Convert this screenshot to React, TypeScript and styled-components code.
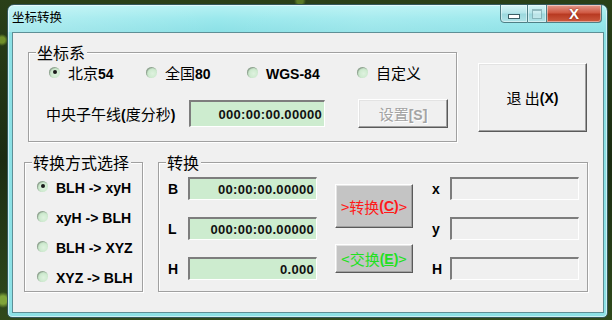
import styled, { createGlobalStyle } from 'styled-components'

const GlobalStyle = createGlobalStyle`
  html, body {
    margin: 0;
    padding: 0;
  }
  body {
    width: 612px;
    height: 320px;
    overflow: hidden;
    font-family: "Noto Sans CJK SC", "Liberation Sans", sans-serif;
  }
`

const Desktop = styled.div`
  box-sizing: border-box;
  width: 612px;
  height: 320px;
  padding: 4px 0 0 7px;
  background:
    radial-gradient(circle at 2px 40px, #6f8f2a 0 3px, transparent 6px),
    radial-gradient(circle at 3px 300px, #7fa43a 0 4px, transparent 8px),
    radial-gradient(circle at 300px 1px, #5a7a26 0 3px, transparent 6px),
    linear-gradient(180deg, #2a4018 0%, #1b2c12 50%, #304a1c 100%);
`

const Window = styled.div`
  box-sizing: border-box;
  width: 601px;
  height: 314px;
  display: flex;
  flex-direction: column;
  border: 1px solid #34585c;
  border-radius: 7px 7px 5px 5px;
  background: linear-gradient(180deg, #b6f2f4 0px, #9ae8ec 14px, #8be0e5 28px, #8de1e6 100%);
  box-shadow: inset 0 0 0 1px rgba(255, 255, 255, 0.55);
  overflow: hidden;
`

const TitleBar = styled.div`
  height: 27px;
  display: flex;
  justify-content: space-between;
  align-items: flex-start;
  background: linear-gradient(90deg, rgba(255, 255, 255, 0.25) 0%, rgba(255, 255, 255, 0) 35%, rgba(255, 255, 255, 0.12) 60%, rgba(255, 255, 255, 0) 100%);
`

const Title = styled.div`
  padding-left: 4px;
  font-size: 12.5px;
  line-height: 24px;
  color: #000;
`

const CaptionGroup = styled.div`
  display: flex;
  margin-right: 5px;
  margin-top: -1px;
`

const CaptionButton = styled.div<{ $w: number; $close?: boolean }>`
  box-sizing: border-box;
  width: ${(p) => p.$w}px;
  height: 19px;
  display: flex;
  align-items: center;
  justify-content: center;
  border: 1px solid #4f7f86;
  border-left-width: 0;
  background: ${(p) =>
    p.$close
      ? 'linear-gradient(180deg, #e49a8c 0%, #d05a44 45%, #b83a22 55%, #cc5a3e 100%)'
      : 'linear-gradient(180deg, #d6f4f6 0%, #b6e6ea 45%, #9cd8de 55%, #b2e4e8 100%)'};
  box-shadow: inset 0 0 0 1px rgba(255, 255, 255, 0.45);

  &:first-child {
    border-left-width: 1px;
    border-bottom-left-radius: 4px;
  }
  &:last-child {
    border-bottom-right-radius: 4px;
  }
`

const MinGlyph = styled.div`
  width: 10px;
  height: 3px;
  margin-top: 5px;
  background: #fff;
  border: 1px solid #3d5f66;
`

const MaxGlyph = styled.div`
  width: 8px;
  height: 7px;
  border: 1px solid rgba(90, 140, 148, 0.55);
  border-top-width: 2px;
  background: rgba(255, 255, 255, 0.3);
`

const CloseGlyph = styled.span`
  font-family: "Liberation Sans", sans-serif;
  font-weight: bold;
  font-size: 15px;
  line-height: 15px;
  color: #fff;
  text-shadow: 0 0 2px #7a2010;
`

const Client = styled.div`
  flex: 1;
  display: flex;
  flex-direction: column;
  margin: 0 3px 4px 4px;
  background: #f0f0f0;
  border: 1px solid #5e8f96;
`

const TopRow = styled.div`
  display: flex;
  align-items: flex-start;
  padding-left: 15px;
`

const BottomRow = styled.div`
  display: flex;
  align-items: flex-start;
  padding-left: 11px;
  margin-top: 20px;
`

const Group = styled.div<{ $w: number; $h: number; $top?: number }>`
  position: relative;
  box-sizing: border-box;
  width: ${(p) => p.$w}px;
  height: ${(p) => p.$h}px;
  margin-top: ${(p) => p.$top ?? 0}px;
  border: 1px solid #a0a0a0;
  box-shadow: 1px 1px 0 #fff, inset 1px 1px 0 #fff;
`

const Legend = styled.span`
  position: absolute;
  top: -10px;
  left: 7px;
  padding: 0 2px 0 1px;
  background: #f0f0f0;
  font-size: 16px;
  line-height: 18px;
  color: #000;
`

const Lat = styled.span`
  font-family: "Liberation Sans", sans-serif;
  font-weight: bold;
  font-size: 14px;
`

const RadioRow = styled.div`
  display: flex;
  align-items: center;
  height: 16px;
  padding: 11px 0 0 20px;
`

const RadioItem = styled.div<{ $w?: number }>`
  display: flex;
  align-items: center;
  width: ${(p) => (p.$w ? `${p.$w}px` : 'auto')};
  height: 30px;
  gap: 8px;
  font-size: 15px;
  color: #000;
  white-space: nowrap;
`

const RadioDot = styled.span<{ $checked?: boolean }>`
  box-sizing: border-box;
  flex: none;
  width: 11px;
  height: 11px;
  display: flex;
  align-items: center;
  justify-content: center;
  border-radius: 50%;
  background: radial-gradient(circle at 60% 60%, #dff2df 0%, #c4e6c6 70%, #a9c9ab 100%);
  box-shadow: inset 1px 1px 1px #8e9e8f;

  &::after {
    content: '';
    display: ${(p) => (p.$checked ? 'block' : 'none')};
    width: 4px;
    height: 4px;
    border-radius: 50%;
    background: #1a1a1a;
  }
`

const MeridianRow = styled.div`
  display: flex;
  align-items: center;
  height: 29px;
  margin-top: 19px;
  padding-left: 17px;
`

const FieldLabel = styled.span<{ $w: number }>`
  width: ${(p) => p.$w}px;
  flex: none;
  font-size: 15px;
  color: #000;
  white-space: nowrap;
`

const Paren = styled.span`
  font-family: "Liberation Sans", sans-serif;
  font-weight: bold;
  font-size: 14px;
`

const Field = styled.div<{ $w?: number; $h?: number; $empty?: boolean }>`
  box-sizing: border-box;
  flex: none;
  width: ${(p) => p.$w ?? 129}px;
  height: ${(p) => p.$h ?? 23}px;
  display: flex;
  align-items: center;
  justify-content: flex-end;
  padding-right: 2px;
  border-style: solid;
  border-width: 2px 1px 1px 2px;
  border-color: #7d7d7d #ffffff #ffffff #7d7d7d;
  background: ${(p) => (p.$empty ? '#f0f0f0' : '#cdeccf')};
  font-family: "Liberation Sans", sans-serif;
  font-weight: bold;
  font-size: 13px;
  letter-spacing: 0.3px;
  color: #111;
`

const RaisedButton = styled.div<{ $w: number; $h: number; $bg?: string; $color?: string }>`
  box-sizing: border-box;
  flex: none;
  width: ${(p) => p.$w}px;
  height: ${(p) => p.$h}px;
  display: flex;
  align-items: center;
  justify-content: center;
  border: 1px solid;
  border-color: #ffffff #5a5a5a #5a5a5a #ffffff;
  box-shadow: inset -1px -1px 0 #a0a0a0, inset 1px 1px 0 #e3e3e3;
  background: ${(p) => p.$bg ?? '#f0f0f0'};
  color: ${(p) => p.$color ?? '#000'};
  font-size: 15px;
  white-space: nowrap;
`

const Disabled = styled.span`
  color: #a3a3a3;
  text-shadow: 1px 1px 0 #fff;
`

const Hotkey = styled.span`
  font-family: "Liberation Sans", sans-serif;
  font-weight: bold;
  font-size: 14px;
`

const Underlined = styled.span`
  text-decoration: underline;
  text-underline-offset: 1px;
`

const ModeList = styled.div`
  display: flex;
  flex-direction: column;
  padding: 8px 0 0 12px;
`

const ConvertBody = styled.div`
  display: flex;
  align-items: flex-start;
  padding: 14px 0 0 9px;
`

const FieldColumn = styled.div`
  display: flex;
  flex-direction: column;
  gap: 17px;
`

const FieldLine = styled.div`
  display: flex;
  align-items: center;
`

const AxisLabel = styled.span<{ $w: number }>`
  width: ${(p) => p.$w}px;
  flex: none;
  font-family: "Liberation Sans", sans-serif;
  font-weight: bold;
  font-size: 14px;
  color: #000;
`

const ButtonColumn = styled.div`
  display: flex;
  flex-direction: column;
  gap: 16px;
  margin: 7px 19px 0 18px;
`

const Radio = ({ checked, w, children }: { checked?: boolean; w?: number; children: React.ReactNode }) => (
  <RadioItem $w={w}>
    <RadioDot $checked={checked} />
    <span>{children}</span>
  </RadioItem>
)

export default function App() {
  return (
    <Desktop>
      <GlobalStyle />
      <Window>
        <TitleBar>
          <Title>坐标转换</Title>
          <CaptionGroup>
            <CaptionButton $w={28}>
              <MinGlyph />
            </CaptionButton>
            <CaptionButton $w={19}>
              <MaxGlyph />
            </CaptionButton>
            <CaptionButton $w={55} $close>
              <CloseGlyph>X</CloseGlyph>
            </CaptionButton>
          </CaptionGroup>
        </TitleBar>

        <Client>
          <TopRow>
            <Group $w={429} $h={90} $top={19}>
              <Legend>坐标系</Legend>
              <RadioRow>
                <Radio checked w={97}>
                  北京<Lat>54</Lat>
                </Radio>
                <Radio w={101}>
                  全国<Lat>80</Lat>
                </Radio>
                <Radio w={110}>
                  <Lat>WGS-84</Lat>
                </Radio>
                <Radio>自定义</Radio>
              </RadioRow>
              <MeridianRow>
                <FieldLabel $w={143}>
                  中央子午线<Paren>(</Paren>度分秒<Paren>)</Paren>
                </FieldLabel>
                <Field $w={136} $h={27}>000:00:00.00000</Field>
                <RaisedButton $w={90} $h={29} style={{ marginLeft: 33 }}>
                  <Disabled>
                    设置<Hotkey>[S]</Hotkey>
                  </Disabled>
                </RaisedButton>
              </MeridianRow>
            </Group>
            <RaisedButton $w={109} $h={69} style={{ margin: '30px 0 0 21px' }}>
              退 出<Hotkey>(X)</Hotkey>
            </RaisedButton>
          </TopRow>

          <BottomRow>
            <Group $w={119} $h={130}>
              <Legend>转换方式选择</Legend>
              <ModeList>
                <Radio checked>
                  <Lat>BLH -&gt; xyH</Lat>
                </Radio>
                <Radio>
                  <Lat>xyH -&gt; BLH</Lat>
                </Radio>
                <Radio>
                  <Lat>BLH -&gt; XYZ</Lat>
                </Radio>
                <Radio>
                  <Lat>XYZ -&gt; BLH</Lat>
                </Radio>
              </ModeList>
            </Group>

            <Group $w={430} $h={130} style={{ marginLeft: 15 }}>
              <Legend>转换</Legend>
              <ConvertBody>
                <FieldColumn>
                  <FieldLine>
                    <AxisLabel $w={20}>B</AxisLabel>
                    <Field>00:00:00.00000</Field>
                  </FieldLine>
                  <FieldLine>
                    <AxisLabel $w={20}>L</AxisLabel>
                    <Field>000:00:00.00000</Field>
                  </FieldLine>
                  <FieldLine>
                    <AxisLabel $w={20}>H</AxisLabel>
                    <Field>0.000</Field>
                  </FieldLine>
                </FieldColumn>

                <ButtonColumn>
                  <RaisedButton $w={78} $h={44} $bg="#c4c4c4" $color="#ff1a1a">
                    &gt;转换<Hotkey>
                      (<Underlined>C</Underlined>)
                    </Hotkey>&gt;
                  </RaisedButton>
                  <RaisedButton $w={78} $h={29} $bg="#c4c4c4" $color="#22e022">
                    &lt;交换<Hotkey>
                      (<Underlined>E</Underlined>)
                    </Hotkey>&gt;
                  </RaisedButton>
                </ButtonColumn>

                <FieldColumn>
                  <FieldLine>
                    <AxisLabel $w={18}>x</AxisLabel>
                    <Field $empty />
                  </FieldLine>
                  <FieldLine>
                    <AxisLabel $w={18}>y</AxisLabel>
                    <Field $empty />
                  </FieldLine>
                  <FieldLine>
                    <AxisLabel $w={18}>H</AxisLabel>
                    <Field $empty />
                  </FieldLine>
                </FieldColumn>
              </ConvertBody>
            </Group>
          </BottomRow>
        </Client>
      </Window>
    </Desktop>
  )
}
